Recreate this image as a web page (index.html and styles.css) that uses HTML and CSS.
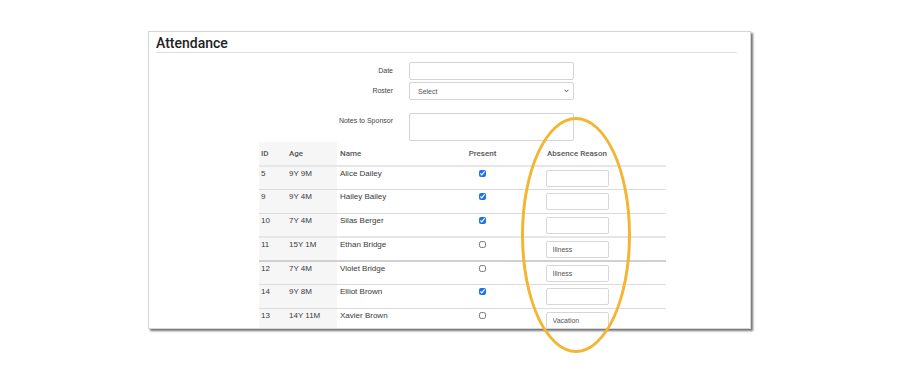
FILE: index.html
```html
<!DOCTYPE html>
<html lang="en">
<head>
  <meta charset="UTF-8" />
  <meta name="viewport" content="width=device-width, initial-scale=1" />
  <title>Attendance</title>
  <link rel="stylesheet" href="styles.css">
</head>
<body>
  <div class="panel">
    <h1>Attendance</h1>

    <form class="form">
      <label class="form-label">Date</label>
      <input class="form-control" type="text" />

      <label class="form-label">Roster</label>
      <select class="form-control">
        <option>Select</option>
      </select>

      <label class="form-label notes-label">Notes to Sponsor</label>
      <textarea class="form-control notes"></textarea>
    </form>

    <table class="attendance">
      <colgroup>
        <col class="c-id">
        <col class="c-age">
        <col class="c-name">
        <col class="c-present">
        <col class="c-reason">
        <col class="c-rest">
      </colgroup>
      <thead>
        <tr>
          <th class="shade">ID</th>
          <th class="shade">Age</th>
          <th>Name</th>
          <th class="center">Present</th>
          <th class="center">Absence Reason</th>
          <th></th>
        </tr>
      </thead>
      <tbody>
        <tr>
          <td class="shade">5</td><td class="shade">9Y 9M</td><td>Alice Dailey</td>
          <td class="center"><input type="checkbox" checked></td>
          <td class="center"><input class="reason" type="text"></td><td></td>
        </tr>
        <tr>
          <td class="shade">9</td><td class="shade">9Y 4M</td><td>Hailey Bailey</td>
          <td class="center"><input type="checkbox" checked></td>
          <td class="center"><input class="reason" type="text"></td><td></td>
        </tr>
        <tr>
          <td class="shade">10</td><td class="shade">7Y 4M</td><td>Silas Berger</td>
          <td class="center"><input type="checkbox" checked></td>
          <td class="center"><input class="reason" type="text"></td><td></td>
        </tr>
        <tr class="split">
          <td class="shade">11</td><td class="shade">15Y 1M</td><td>Ethan Bridge</td>
          <td class="center"><input type="checkbox"></td>
          <td class="center"><input class="reason" type="text" value="Illness"></td><td></td>
        </tr>
        <tr class="split dark">
          <td class="shade">12</td><td class="shade">7Y 4M</td><td>Violet Bridge</td>
          <td class="center"><input type="checkbox"></td>
          <td class="center"><input class="reason" type="text" value="Illness"></td><td></td>
        </tr>
        <tr>
          <td class="shade">14</td><td class="shade">9Y 8M</td><td>Elliot Brown</td>
          <td class="center"><input type="checkbox" checked></td>
          <td class="center"><input class="reason" type="text"></td><td></td>
        </tr>
        <tr>
          <td class="shade">13</td><td class="shade">14Y 11M</td><td>Xavier Brown</td>
          <td class="center"><input type="checkbox"></td>
          <td class="center"><input class="reason" type="text" value="Vacation"></td><td></td>
        </tr>
      </tbody>
    </table>
  </div>

  <div class="highlight"></div>
</body>
</html>
```

FILE: styles.css
```css
* {
  margin: 0;
  padding: 0;
  box-sizing: border-box;
}

body {
  background: #ffffff;
  font-family: "Liberation Sans", Arial, sans-serif;
  color: #333;
  position: relative;
  width: 900px;
  height: 375px;
  overflow: hidden;
}

.panel {
  margin: 31px 0 0 148px;
  width: 603px;
  height: 298px;
  padding: 3px 13px 0 7px;
  background: #fff;
  border: 1px solid #d6d6d6;
  box-shadow: 2px 2px 2px rgba(0, 0, 0, 0.55);
  overflow: hidden;
}

.panel h1 {
  font-family: Roboto, "Liberation Sans", sans-serif;
  font-size: 14px;
  line-height: 17px;
  font-weight: 500;
  color: #222;
  border-bottom: 1px solid #dedede;
}

/* form */

.form {
  display: grid;
  grid-template-columns: 237px 165px;
  column-gap: 16px;
  row-gap: 2px;
  margin-top: 9px;
}

.form-label {
  font-size: 7px;
  font-weight: 400;
  color: #444;
  text-align: right;
  align-self: center;
  margin-top: -2px;
}

.notes-label {
  align-self: start;
  padding-top: 4px;
  margin-top: 11px;
}

.form-control {
  height: 18px;
  border: 1px solid #d4d4d4;
  border-radius: 2px;
  background: #fff;
  font-family: inherit;
  font-size: 7px;
  color: #555;
  padding: 0 8px;
  outline: none;
}

select.form-control {
  appearance: none;
  background-image: url("data:image/svg+xml;utf8,<svg xmlns='http://www.w3.org/2000/svg' width='5' height='4'><path d='M0.5 0.8 L2.5 2.8 L4.5 0.8' fill='none' stroke='%23555' stroke-width='1'/></svg>");
  background-repeat: no-repeat;
  background-position: right 4px center;
}

.notes {
  height: 28px;
  margin-top: 11px;
  resize: none;
}

/* table */

.attendance {
  margin: 1px 0 0 103px;
  width: 407px;
  border-collapse: collapse;
  table-layout: fixed;
  font-size: 8px;
}

.c-id { width: 26px; }
.c-age { width: 52px; }
.c-name { width: 107px; }
.c-present { width: 77px; }
.c-reason { width: 112px; }
.c-rest { width: 33px; }

.attendance th {
  height: 24px;
  padding: 0 2px;
  font-family: Roboto, "Liberation Sans", sans-serif;
  font-size: 8px;
  font-weight: 500;
  color: #555;
  text-align: left;
  vertical-align: middle;
  border-bottom: 2px solid #e6e6e6;
}

.attendance td {
  height: 23.8px;
  padding: 2px 2px 0;
  vertical-align: top;
  line-height: 10px;
  color: #3a3a3a;
  border-top: 1px solid #dcdcdc;
}

.attendance th:nth-child(2),
.attendance td:nth-child(2) {
  padding-left: 4px;
}

.attendance th:nth-child(3),
.attendance td:nth-child(3) {
  padding-left: 3px;
}

.attendance tr.split td {
  border-top: 2px solid #e6e6e6;
}

.attendance tr.split.dark td {
  border-top-color: #d0d0d0;
}

.attendance .shade {
  background: #f6f6f6;
}

.attendance .center {
  text-align: center;
}

.attendance input[type="checkbox"] {
  width: 7px;
  height: 7px;
  margin-top: 1px;
  accent-color: #1a73e8;
}

.reason {
  width: 63px;
  height: 17px;
  margin-top: 1px;
  border: 1px solid #d6d6d6;
  border-radius: 2px;
  font-family: inherit;
  font-size: 7px;
  color: #555;
  padding: 0 6px;
  outline: none;
}

/* annotation ellipse */

.highlight {
  position: absolute;
  left: 521px;
  top: 117px;
  width: 110px;
  height: 236px;
  border: 3px solid #f4b532;
  border-radius: 50%;
  pointer-events: none;
}
```
